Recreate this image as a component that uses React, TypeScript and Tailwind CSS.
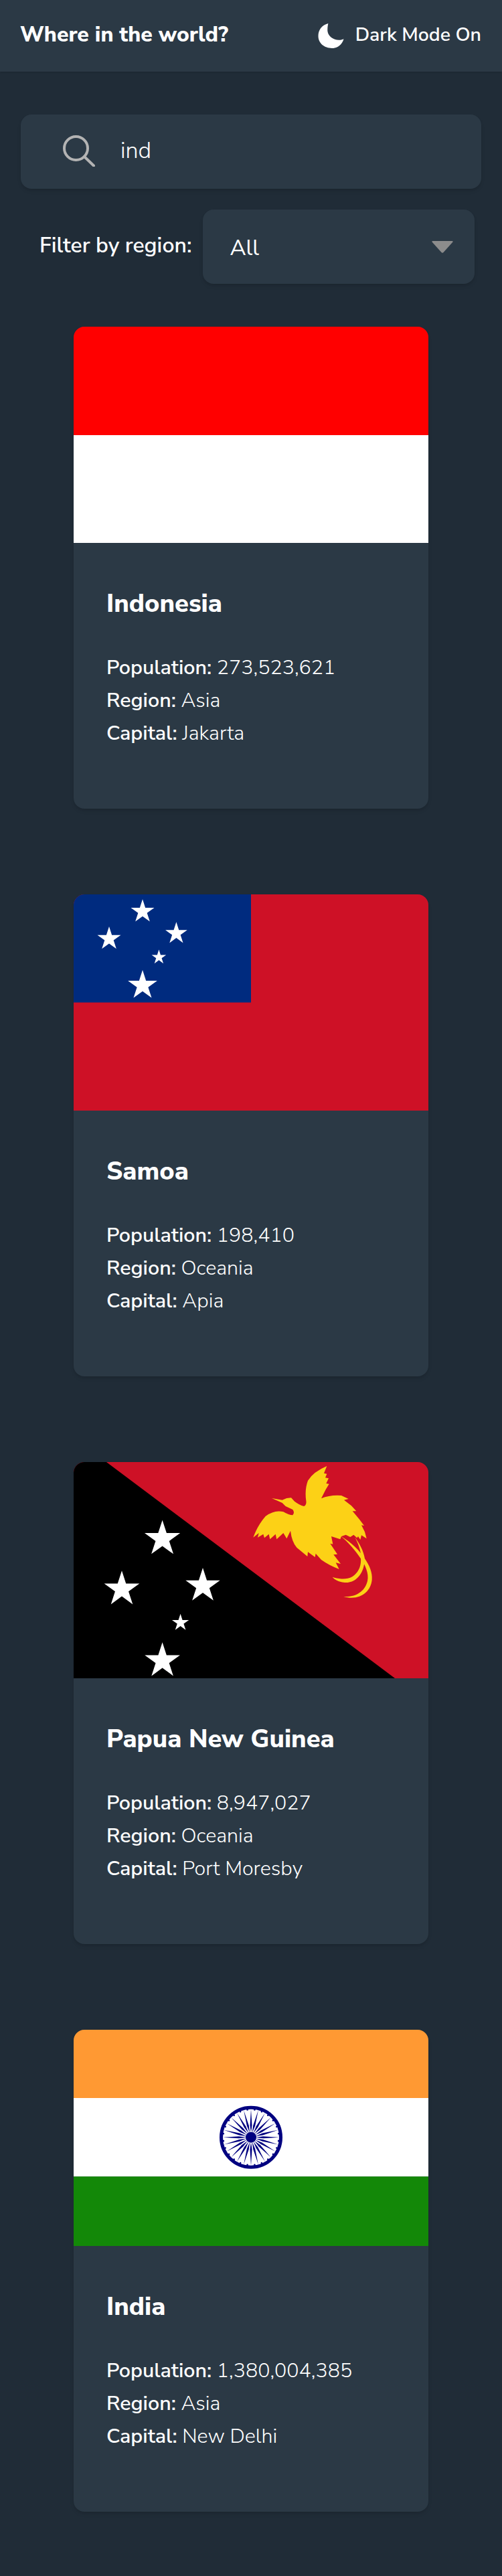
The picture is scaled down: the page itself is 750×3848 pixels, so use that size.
const FONT = "font-['Nunito_Sans','Open_Sans','Noto_Sans',sans-serif]";

function star(cx: number, cy: number, r: number) {
  const pts: string[] = [];
  for (let i = 0; i < 10; i++) {
    const rad = i % 2 === 0 ? r : r * 0.382;
    const a = (Math.PI / 5) * i - Math.PI / 2;
    pts.push(`${(cx + rad * Math.cos(a)).toFixed(2)},${(cy + rad * Math.sin(a)).toFixed(2)}`);
  }
  return pts.join(" ");
}

function Indonesia() {
  return (
    <svg viewBox="0 0 530 323" preserveAspectRatio="none" className="block w-full h-full">
      <rect width="530" height="162" fill="#ff0000" />
      <rect y="162" width="530" height="161" fill="#ffffff" />
    </svg>
  );
}

function Samoa() {
  return (
    <svg viewBox="0 0 530 323" preserveAspectRatio="none" className="block w-full h-full">
      <rect width="530" height="323" fill="#ce1126" />
      <rect width="265" height="161.5" fill="#002b7f" />
      <polygon points={star(103, 25.7, 18.4)} fill="#fff" />
      <polygon points={star(53, 66.4, 18.4)} fill="#fff" />
      <polygon points={star(153.4, 58.5, 17.2)} fill="#fff" />
      <polygon points={star(127.4, 94, 11.4)} fill="#fff" />
      <polygon points={star(103, 136, 23)} fill="#fff" />
    </svg>
  );
}

function Png() {
  return (
    <svg viewBox="0 0 530 323" preserveAspectRatio="none" className="block w-full h-full">
      <rect width="530" height="323" fill="#ce1126" />
      <polygon points="0,0 49,0 480,323 0,323" fill="#000" />
      <polygon points={star(132.6, 114.7, 28)} fill="#fff" />
      <polygon points={star(72, 190, 27.7)} fill="#fff" />
      <polygon points={star(193, 185, 27)} fill="#fff" />
      <polygon points={star(159.6, 240, 13.3)} fill="#fff" />
      <polygon points={star(132.6, 297, 27.7)} fill="#fff" />
      <g transform="translate(250,-14) scale(0.33333)" fill="#fcd116">
        <path d="M138 204 L185 212 Q205 202 225 202 L240 218 Q262 235 282 240 Q295 235 292 215 Q285 165 300 125 Q325 85 385 60 L372 92 L385 95 L378 112 L393 115 L382 138 L395 140 L380 165 L360 205 Q400 188 450 192 L482 207 L462 212 L495 238 L517 262 L500 262 L530 298 L552 327 L540 325 L555 355 L563 385 L540 370 L535 390 L525 375 L520 382 L505 368 L490 378 L470 368 L450 375 L445 388 L405 375 L412 410 L400 407 L432 455 L415 457 L447 498 L425 493 L440 522 Q395 505 360 480 L335 452 L332 468 L300 445 L298 465 L250 425 Q228 400 222 350 L205 385 L190 360 L160 388 L155 365 L130 388 L125 365 L105 382 L100 365 L75 380 L80 360 L55 380 Q75 325 110 285 Q150 255 190 265 Q215 280 232 280 Q242 268 232 255 L200 240 L185 225 Z" />
        <path d="M448 374 C495 402 535 440 553 475 C557 525 525 585 465 582 C440 580 420 570 410 557 C435 565 470 572 500 555 C525 538 540 510 537 475 C515 440 480 400 448 374Z" />
        <path d="M510 378 C530 405 550 440 555 475 C575 505 590 535 587 570 C582 625 530 665 460 645 C510 648 555 625 567 575 C575 540 555 505 540 475 C538 440 525 405 510 378Z" />
      </g>
    </svg>
  );
}

function India() {
  const spokes = Array.from({ length: 24 }, (_, i) => i * 15);
  return (
    <svg viewBox="0 0 530 323" preserveAspectRatio="none" className="block w-full h-full">
      <rect width="530" height="102" fill="#ff9933" />
      <rect y="102" width="530" height="117.5" fill="#ffffff" />
      <rect y="219.3" width="530" height="104" fill="#138808" />
      <g transform="translate(265,160.7)">
        <circle r="44.5" fill="none" stroke="#000080" strokeWidth="5" />
        <circle r="8" fill="#000080" />
        {spokes.map((a) => (
          <g key={a} transform={`rotate(${a})`}>
            <polygon points="0,-7 1.5,-18 0,-42 -1.5,-18" fill="#000080" />
            <circle cx="0" cy="-41.5" r="1.3" transform="rotate(7.5)" fill="#000080" />
          </g>
        ))}
      </g>
    </svg>
  );
}

const countries = [
  { name: "Indonesia", pop: "273,523,621", region: "Asia", capital: "Jakarta", flag: <Indonesia /> },
  { name: "Samoa", pop: "198,410", region: "Oceania", capital: "Apia", flag: <Samoa /> },
  { name: "Papua New Guinea", pop: "8,947,027", region: "Oceania", capital: "Port Moresby", flag: <Png /> },
  { name: "India", pop: "1,380,004,385", region: "Asia", capital: "New Delhi", flag: <India /> },
];

export default function App() {
  return (
    <div className={`${FONT} min-h-[3848px] bg-[#202c37] text-white`}>
      <header className="h-[107px] bg-[#2b3945] flex items-center justify-between pl-[30px] pr-[31px] pb-[3px] shadow-sm">
        <h1 className="text-[32px] font-extrabold leading-none">Where in the world?</h1>
        <div className="flex items-center gap-[17px]">
          <svg viewBox="0 0 115 112" className="w-[39px] h-[37px] mt-[3px]" fill="#fff">
            <path d="M45 0 C15 8 0 30 0 57 C0 90 28 112 62 112 C88 112 108 95 115 70 C85 85 45 65 42 35 C41 22 43 10 45 0Z" />
          </svg>
          <span className="text-[28.5px] font-semibold leading-none">Dark Mode On</span>
        </div>
      </header>
      <div className="mt-[64px] mx-[31px] h-[111px] rounded-2xl bg-[#2b3945] shadow-md flex items-center pl-[63px]">
        <svg viewBox="0 0 48 47" className="w-[48px] h-[47px] mr-[38px] mb-[2px]" fill="none" stroke="#b3b3b3" strokeWidth="4" strokeLinecap="round">
          <circle cx="19.5" cy="19.5" r="17.5" />
          <path d="M32 32 L46 45.5" />
        </svg>
        <span className="text-[34px] font-light leading-none mb-[4px]">ind</span>
      </div>
      <div className="mt-[31px] flex items-center pl-[59px] pr-[41px] gap-[17px]">
        <span className="text-[32px] font-semibold leading-none mb-[3px]">Filter by region:</span>
        <div className="flex-1 h-[111px] rounded-2xl bg-[#2b3945] shadow-md flex items-center justify-between pl-[40px] pr-[32px]">
          <span className="text-[33px] font-normal leading-none mt-[3px]">All</span>
          <svg viewBox="0 0 32 18" className="w-[32px] h-[18px]" fill="#8c8c8c">
            <path d="M1.5 0 H30.5 Q32.5 0 31 2 L17.5 17 Q16 18.5 14.5 17 L1 2 Q-0.5 0 1.5 0Z" />
          </svg>
        </div>
      </div>
      <main className="mt-[64px] flex flex-col gap-[128px] pb-[96px] items-center">
        {countries.map((c) => (
          <article key={c.name} className="w-[530px] h-[720px] rounded-2xl bg-[#2b3945] shadow-md overflow-hidden">
            <div className="h-[323px]">{c.flag}</div>
            <div className="pl-[49px] pt-[65px]">
              <h2 className="text-[38px] font-extrabold leading-[52px]">{c.name}</h2>
              <div className="mt-[45px] text-[30.4px] leading-[49px] font-light">
                <p><span className="font-semibold">Population:</span> {c.pop}</p>
                <p><span className="font-semibold">Region:</span> {c.region}</p>
                <p><span className="font-semibold">Capital:</span> {c.capital}</p>
              </div>
            </div>
          </article>
        ))}
      </main>
    </div>
  );
}
